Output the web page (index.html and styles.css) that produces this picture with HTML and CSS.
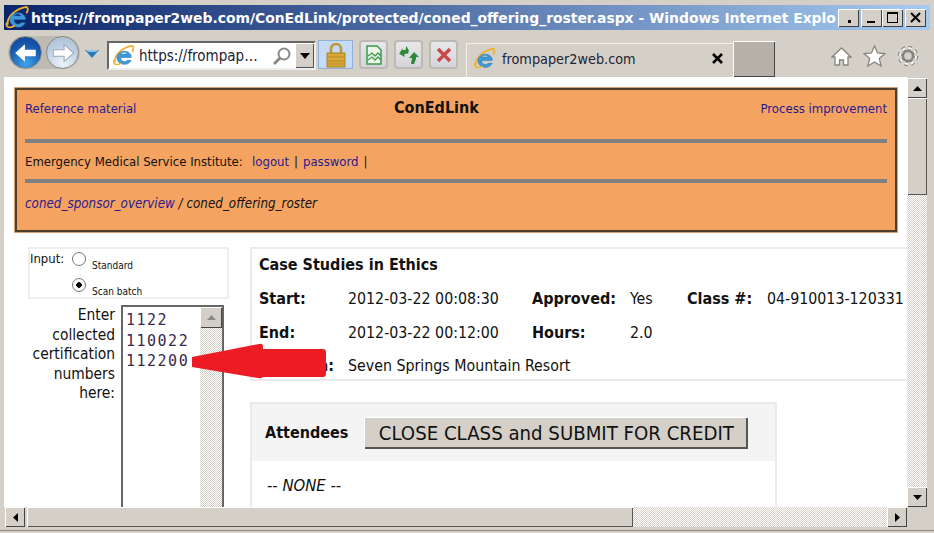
FILE: index.html
```html
<!DOCTYPE html>
<html>
<head>
  <title>coned_offering_roster</title>
  <link rel="stylesheet" href="styles.css">
</head>
<body>
  <svg class="defs" width="0" height="0">
    <symbol id="ie" viewBox="0 0 24 24">
      <path d="M3 19C2 12 10 4 20 2c3-.5 3 3 1 6" fill="none" stroke="#f0b030" stroke-width="1.8"/>
      <path d="M5 14a8 8 0 0 1 15-2v2H9a4 4 0 0 0 7 3h4a8 8 0 0 1-15-3zM9 10.500h7a4 4 0 0 0-7 0z" fill="#3d9ad8" stroke="#2a78bc" stroke-width=".6"/>
      <path d="M2 17c-1 4 2 6 8 3" fill="none" stroke="#f0b030" stroke-width="1.6"/>
    </symbol>
  </svg>

  <div class="window">
    <div class="titlebar">
      <svg class="ie-title" width="26" height="25"><use href="#ie"/></svg>
      <div class="title">https://frompaper2web.com/ConEdLink/protected/coned_offering_roster.aspx - Windows Internet Explo</div>
      <div class="controls">
        <span class="ctl"><svg width="21" height="18"><rect x="10" y="11" width="3" height="3"/></svg></span>
        <span class="ctl gap"><svg width="21" height="18"><rect x="6" y="12" width="8" height="2"/></svg></span>
        <span class="ctl"><svg width="21" height="18"><path d="M5 3h11v11H5zM6 5v8h9V5z" fill-rule="evenodd"/></svg></span>
        <span class="ctl gap"><svg width="21" height="18"><path d="M6 4l9 9M15 4l-9 9" stroke="#000" stroke-width="2"/></svg></span>
      </div>
    </div>

    <div class="toolbar">
      <div class="nav">
        <span class="round back">
          <svg width="26" height="26" viewBox="0 0 24 24"><path d="M2 12l9-8v5h10v6H11v5z" fill="#fff"/></svg>
        </span>
        <span class="round forward">
          <svg width="26" height="26" viewBox="0 0 24 24"><path d="M22 12l-9-8v5H3v6h10v5z" fill="#fff" stroke="#9aa8b8"/></svg>
        </span>
      </div>
      <svg class="nav-drop" width="14" height="9"><path d="M0 1h14L7 9z" fill="#2a78bc"/><path d="M1 1h12l-2 2H3z" fill="#8cc4ec"/></svg>

      <div class="address">
        <svg width="23" height="23"><use href="#ie"/></svg>
        <span class="url">https://frompap…</span>
        <svg class="search" width="20" height="20" viewBox="0 0 20 20"><circle cx="12" cy="8" r="5.500" fill="none" stroke="#8a8a84" stroke-width="2"/><path d="M8 12l-6 6" stroke="#8a8a84" stroke-width="3"/></svg>
        <span class="addr-drop"><svg width="10" height="6"><path d="M0 0h10L5 6z"/></svg></span>
      </div>

      <span class="lock">
        <svg width="22" height="26" viewBox="0 0 22 26"><path d="M6 12V7a5 5 0 0 1 10 0v5" fill="none" stroke="#c09a30" stroke-width="2.600"/><rect x="2" y="11" width="18" height="14" fill="#d8a838" stroke="#a88020"/><path d="M3 15h16M3 19h16M3 22h16" stroke="#b88a28"/></svg>
      </span>
      <span class="tool t1">
        <svg width="20" height="20" viewBox="0 0 20 20"><path d="M3 1h10l4 4v14H3z" fill="#eef6ea" stroke="#3a9a48" stroke-width="1.500"/><path d="M4 11l4-3 3 3 3-3 3 3M4 15l4-3 3 3 3-3 3 3" fill="none" stroke="#3a9a48" stroke-width="1.300"/></svg>
      </span>
      <span class="tool">
        <svg width="22" height="20" viewBox="0 0 22 20"><path d="M9 1L8 5H5v-2L1 8l5 4v-3h4l1-3z" fill="#2a8a3a" transform="rotate(-8 6 7)"/><path d="M13 19l1-6h-3l5-6 5 5h-3v2l-2 5z" fill="#2a8a3a"/></svg>
      </span>
      <span class="tool t3">
        <svg width="18" height="18" viewBox="0 0 18 18"><path d="M3 3l12 12M15 3L3 15" stroke="#c84a4a" stroke-width="3.400"/></svg>
      </span>

      <div class="tab">
        <svg width="23" height="23"><use href="#ie"/></svg>
        <span class="tab-name">frompaper2web.com</span>
        <svg class="tab-x" width="11" height="11"><path d="M1 1l9 9M10 1l-9 9" stroke="#000" stroke-width="2.600"/></svg>
      </div>
      <div class="newtab"></div>

      <div class="favs">
        <svg width="21" height="21" viewBox="0 0 21 21"><path d="M10.500 2L1 11h3v8h4.500v-5h4v5H17v-8h3z" fill="#fff" stroke="#85857f" stroke-width="1.300"/></svg>
        <svg width="23" height="22" viewBox="0 0 23 22"><path d="M11.500 1l3 7 7.500.6-5.700 5 1.800 7.400-6.600-4-6.600 4 1.800-7.400L1 8.600 8.500 8z" fill="#fff" stroke="#85857f" stroke-width="1.300"/></svg>
        <svg width="22" height="22" viewBox="0 0 22 22"><circle cx="11" cy="11" r="5" fill="none" stroke="#85857f" stroke-width="2.400"/><circle cx="11" cy="11" r="8" fill="none" stroke="#85857f" stroke-width="4.400" stroke-dasharray="3.300 3"/><circle cx="11" cy="11" r="8" fill="none" stroke="#fff" stroke-width="2" stroke-dasharray="3.300 3"/></svg>
      </div>
    </div>

    <div class="client">
      <div class="viewport">
        <div class="banner">
          <div class="banner-top">
            <a href="#">Reference material</a>
            <strong class="brand">ConEdLink</strong>
            <a href="#">Process improvement</a>
          </div>
          <div class="rule"></div>
          <div class="banner-user">Emergency Medical Service Institute: &nbsp;<a class="user-link" href="#">logout</a><span class="pipe">|</span><a href="#">password</a><span class="pipe">|</span></div>
          <div class="rule"></div>
          <div class="crumbs"><a href="#">coned_sponsor_overview</a> / coned_offering_roster</div>
        </div>

        <div class="main">
          <div class="left">
            <div class="input-box">
              <div class="input-row">
                <span class="input-label">Input:</span>
                <span class="radio"></span>
                <span class="radio-text">Standard</span>
              </div>
              <div class="input-row">
                <span class="input-label"></span>
                <span class="radio checked"></span>
                <span class="radio-text">Scan batch</span>
              </div>
            </div>
            <div class="cert">
              <div class="cert-label">Enter collected certification numbers here:</div>
              <div class="cert-box">
                <div class="cert-lines">1122<br>110022<br>112200</div>
                <div class="cert-scroll">
                  <span class="sb-btn light"><svg width="9" height="5"><path d="M0 5h9L4.500 0z" fill="#8a8a84"/></svg></span>
                </div>
              </div>
            </div>
          </div>

          <div class="right">
            <div class="info">
              <div class="info-title">Case Studies in Ethics</div>
              <div class="info-grid">
                <b>Start:</b><span>2012-03-22 00:08:30</span><b>Approved:</b><span>Yes</span><b>Class #:</b><span>04-910013-120331</span>
                <b>End:</b><span>2012-03-22 00:12:00</span><b>Hours:</b><span>2.0</span><i></i><i></i>
                <b>Location:</b><span class="wide">Seven Springs Mountain Resort</span>
              </div>
            </div>
            <div class="attendees">
              <div class="att-head">
                <b>Attendees</b>
                <button class="close-btn">CLOSE CLASS and SUBMIT FOR CREDIT</button>
              </div>
              <div class="att-body">-- NONE --</div>
            </div>
          </div>
        </div>
      </div>

      <div class="vscroll">
        <span class="sb-btn"><svg width="9" height="5"><path d="M0 5h9L4.500 0z"/></svg></span>
        <span class="sb-thumb"></span>
        <span class="sb-track"></span>
        <span class="sb-btn"><svg width="9" height="5"><path d="M0 0h9L4.500 5z"/></svg></span>
      </div>
    </div>

    <div class="hscroll">
      <span class="sb-btn"><svg width="5" height="9"><path d="M5 0v9L0 4.500z"/></svg></span>
      <span class="sb-thumb"></span>
      <span class="sb-track"></span>
      <span class="sb-btn"><svg width="5" height="9"><path d="M0 0v9l5-4.500z"/></svg></span>
    </div>
    <div class="bottom-line"></div>

    <svg class="arrow" width="136" height="38" viewBox="0 0 136 38">
      <path d="M1 15L68 2q4-1 4 3v2h60q3 0 3 3v22q0 3-3 3H72q-2 2-5 1L1 25z" fill="#ed1c24"/>
    </svg>
  </div>
</body>
</html>
```

FILE: styles.css
```css
* {
  box-sizing: border-box;
  margin: 0;
  padding: 0;
}

html, body {
  width: 934px;
  height: 533px;
  overflow: hidden;
  background: #d4d0c8;
}

body {
  font-family: "DejaVu Sans Condensed", "DejaVu Sans", sans-serif;
  color: #111;
}

.defs {
  display: block;
  height: 0;
}

.window {
  position: relative;
  height: 533px;
  padding-top: 5px;
}

/* title bar */
.titlebar {
  display: flex;
  align-items: center;
  height: 25px;
  margin: 0 4px;
  background: linear-gradient(90deg, #0a246a, #a6caf0);
}

.ie-title {
  flex: none;
  margin-right: 1px;
}

.title {
  flex: 1;
  white-space: nowrap;
  color: #fff;
  font: bold 13.900px "DejaVu Sans", sans-serif;
}

.controls {
  display: flex;
  flex: none;
  margin-right: 4px;
}

.ctl {
  display: block;
  width: 21px;
  height: 18px;
  background: #d4d0c8;
  box-shadow: inset 1px 1px 0 #fff, inset -1px -1px 0 #404040;
}

.ctl.gap {
  margin-left: 2px;
}

.ctl svg {
  display: block;
}

/* toolbar */
.toolbar {
  display: flex;
  align-items: flex-start;
  height: 47px;
  padding-left: 8px;
}

.nav {
  display: flex;
  gap: 4px;
  margin-top: 6px;
  padding: 0 1px;
  border-radius: 18px;
  background: #bdbab2;
}

.round {
  display: flex;
  align-items: center;
  justify-content: center;
  width: 33px;
  height: 33px;
  border-radius: 50%;
  border: 1px solid #8a8a84;
}

.back {
  background: radial-gradient(circle at 50% 85%, #3fa4ec, #1a5cb4 55%, #0d3e8e);
}

.forward {
  background: radial-gradient(circle at 50% 85%, #eef4fa, #bccde0 60%, #a8bad0);
}

.nav-drop {
  flex: none;
  margin: 19px 0 0 5px;
}

.address {
  display: flex;
  align-items: center;
  flex: none;
  width: 209px;
  height: 29px;
  margin: 11px 0 0 8px;
  padding-left: 3px;
  background: #fff;
  border: 2px solid;
  border-color: #666 #eee #eee #666;
}

.url {
  flex: 1;
  margin-left: 4px;
  font: 15px "DejaVu Sans Condensed", sans-serif;
  color: #223;
  white-space: nowrap;
}

.search {
  flex: none;
  margin-right: 3px;
}

.addr-drop {
  display: flex;
  align-items: center;
  justify-content: center;
  flex: none;
  width: 19px;
  height: 25px;
  background: #d4d0c8;
  box-shadow: inset 1px 1px 0 #fff, inset -1px -1px 0 #555;
}

.lock {
  display: flex;
  align-items: center;
  justify-content: center;
  flex: none;
  width: 35px;
  height: 29px;
  margin: 10px 0 0 2px;
  background: #c4dcfa;
  border: 1px solid #8fb0d0;
}

.tool {
  display: flex;
  align-items: center;
  justify-content: center;
  flex: none;
  width: 29px;
  height: 29px;
  margin: 10px 0 0 6px;
  border: 2px solid #bcbab4;
  border-radius: 4px;
  background: linear-gradient(#e8e8ea, #d4d4da);
}

.tab {
  display: flex;
  align-items: center;
  flex: none;
  width: 267px;
  height: 34px;
  margin: 13px 0 0 8px;
  padding: 0 10px 4px 6px;
  border-top: 1px solid #f0eee8;
  border-left: 1px solid #f0eee8;
}

.tab-name {
  flex: 1;
  margin-left: 6px;
  font: 14.300px "DejaVu Sans Condensed", sans-serif;
  color: #223;
}

.newtab {
  flex: none;
  width: 42px;
  height: 36px;
  margin-top: 11px;
  background: #b5b1a9;
  box-shadow: inset 1px 1px 0 #fff, inset -1px -1px 0 #444;
}

.favs {
  display: flex;
  align-items: center;
  gap: 11px;
  margin: 15px 0 0 56px;
}

/* client area */
.client {
  display: flex;
  height: 430px;
  margin-left: 4px;
}

.viewport {
  width: 903px;
  height: 430px;
  overflow: hidden;
  background: #fff;
  font-size: 13px;
}

a {
  color: #2a1a90;
  text-decoration: none;
}

.banner {
  width: 882px;
  height: 144px;
  margin: 11px 0 15px 11px;
  padding: 0 8px;
  background: #f4a460;
  border: 2px solid #4e3f2c;
  outline: 1px solid #d8a070;
}

.banner-top {
  display: flex;
  justify-content: space-between;
  align-items: center;
  height: 37px;
  margin-bottom: 12px;
}

.brand {
  margin-right: 24px;
  margin-bottom: 3px;
  font-size: 16px;
  color: #111;
}

.rule {
  height: 4px;
  background: #808080;
}

.banner-user {
  height: 36px;
  line-height: 38px;
}

.user-link {
  margin-left: 2px;
}

.pipe {
  margin: 0 5px;
}

.crumbs {
  height: 38px;
  line-height: 41px;
  font-size: 13.300px;
  font-style: italic;
}

.main {
  display: flex;
  margin-left: 24px;
}

.left {
  flex: none;
  width: 201px;
}

.input-box {
  height: 52px;
  padding: 2px 0 0 0;
  border: 2px solid #eee;
}

.input-row {
  display: flex;
  height: 26px;
  font-size: 13px;
}

.input-label {
  flex: none;
  width: 42px;
}

.radio {
  flex: none;
  width: 14px;
  height: 14px;
  margin-top: 1px;
  border-radius: 50%;
  border: 1px solid #777;
  background: #fff;
}

.radio.checked {
  background: radial-gradient(circle, #000 0 2.500px, #fff 3px);
}

.radio-text {
  margin: 9px 0 0 6px;
  font-size: 10px;
  white-space: nowrap;
}

.cert {
  display: flex;
  margin-top: 6px;
}

.cert-label {
  flex: none;
  width: 87px;
  padding-top: 1px;
  text-align: right;
  font-size: 15.400px;
  line-height: 19.500px;
}

.cert-box {
  display: flex;
  flex: none;
  width: 103px;
  height: 300px;
  margin-left: 6px;
  border: 2px solid #666;
}

.cert-lines {
  flex: 1;
  padding: 3px 0 0 3px;
  font: 15px/20.500px "DejaVu Sans Mono", monospace;
  letter-spacing: 1.500px;
  color: #3a2a50;
}

.cert-scroll {
  flex: none;
  width: 22px;
  background: repeating-conic-gradient(#d4d0c8 0 25%, #fff 0 50%) 0 0 / 2px 2px;
}

.right {
  flex: none;
  width: 700px;
  margin-left: 21px;
}

.info {
  height: 134px;
  padding: 6px 0 0 7px;
  border: 2px solid #eaeaea;
  border-right: none;
}

.info-title {
  font-size: 16px;
  font-weight: bold;
  line-height: 20px;
}

.info-grid {
  display: grid;
  grid-template-columns: 89px 184px 98px 57px 80px auto;
  grid-auto-rows: 33.500px;
  align-items: center;
  margin-top: 7px;
  font-size: 15.800px;
  white-space: nowrap;
}

.info-grid b {
  font-size: 16px;
}

.wide {
  grid-column: 2 / -1;
}

.attendees {
  width: 527px;
  height: 130px;
  margin-top: 21px;
  border: 2px solid #eaeaea;
}

.att-head {
  display: flex;
  align-items: center;
  gap: 16px;
  height: 57px;
  padding-left: 13px;
  background: #f4f4f4;
  font-size: 16px;
}

.close-btn {
  width: 384px;
  height: 32px;
  border: none;
  background: #d4d0c8;
  box-shadow: inset 1px 1px 0 #fff, inset -2px -2px 0 #555;
  font: 20.200px "DejaVu Sans Condensed", sans-serif;
  color: #111;
}

.att-body {
  padding: 15px 0 0 15px;
  font-style: italic;
  font-size: 16.500px;
}

/* scrollbars */
.sb-btn {
  display: flex;
  align-items: center;
  justify-content: center;
  flex: none;
  width: 20px;
  height: 20px;
  background: #d4d0c8;
  box-shadow: inset 1px 1px 0 #fff, inset -1px -1px 0 #444;
}

.sb-btn.light {
  width: 22px;
  height: 21px;
}

.sb-thumb {
  flex: none;
  background: #d4d0c8;
  box-shadow: inset 1px 1px 0 #fff, inset -1px -1px 0 #555;
}

.sb-track {
  flex: 1;
  background: repeating-conic-gradient(#d4d0c8 0 25%, #fff 0 50%) 0 0 / 2px 2px;
}

.vscroll {
  display: flex;
  flex-direction: column;
  flex: none;
  width: 20px;
  padding-top: 1px;
}

.vscroll .sb-thumb {
  height: 97px;
}

.hscroll {
  display: flex;
  width: 903px;
  height: 20px;
  margin-left: 4px;
  padding-left: 1px;
}

.hscroll .sb-thumb {
  width: 606px;
  margin-left: 2px;
}

.bottom-line {
  height: 1px;
  margin-top: 3px;
  background: #8a8a84;
}

.arrow {
  position: absolute;
  left: 191px;
  top: 342px;
}
```
